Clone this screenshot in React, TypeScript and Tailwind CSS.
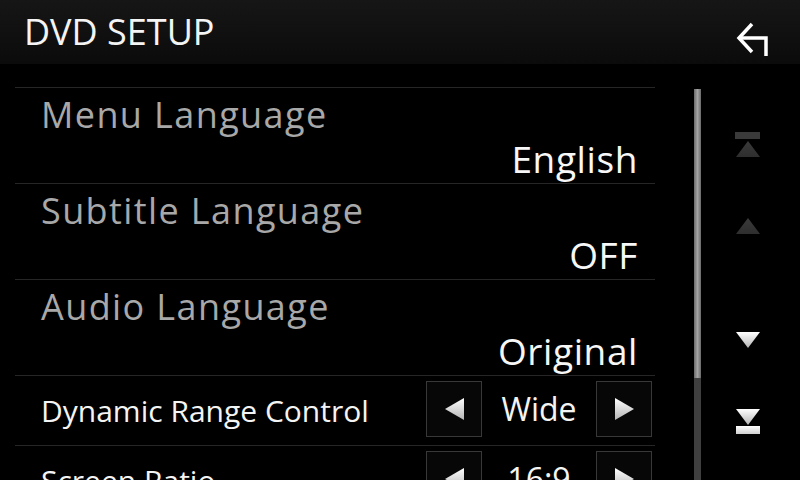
import React from "react";

const font = { fontFamily: '"Open Sans", "Noto Sans", sans-serif' };

const Tri = ({ dir, dim }: { dir: "left" | "right" | "up" | "down"; dim?: boolean }) => {
  const pts = {
    left: "0,11 19,0 19,22",
    right: "19,11 0,0 0,22",
    up: "12,0 0,16 24,16",
    down: "12,16 0,0 24,0",
  }[dir];
  const horiz = dir === "left" || dir === "right";
  const id = `g-${dir}-${dim ? "d" : "l"}`;
  return (
    <svg width={horiz ? 19 : 24} height={horiz ? 22 : 16} viewBox={horiz ? "0 0 19 22" : "0 0 24 16"}>
      <defs>
        <linearGradient id={id} x1="0" y1="0" x2="0" y2="1">
          <stop offset="0" stopColor={dim ? "#3a3a3a" : "#ffffff"} />
          <stop offset="1" stopColor={dim ? "#2e2e2e" : "#b4b4b4"} />
        </linearGradient>
      </defs>
      <polygon points={pts} fill={`url(#${id})`} />
    </svg>
  );
};

const ArrowBox = ({ dir }: { dir: "left" | "right" }) => (
  <div className="flex h-[56px] w-[56px] items-center justify-center border border-[#383838] bg-[#070707]">
    <Tri dir={dir} />
  </div>
);

const rows = [
  { label: "Menu Language", value: "English" },
  { label: "Subtitle Language", value: "OFF" },
  { label: "Audio Language", value: "Original" },
];

const controls = [
  { label: "Dynamic Range Control", value: "Wide" },
  { label: "Screen Ratio", value: "16:9" },
];

export default function App() {
  return (
    <div className="flex h-[480px] w-[800px] flex-col overflow-hidden bg-black text-white" style={font}>
      <div className="flex h-[64px] shrink-0 items-center justify-between bg-gradient-to-b from-[#161616] to-[#0b0b0b] pl-[24px] pr-[30px]">
        <div className="text-[36px] leading-none text-[#f4f4f4]">DVD SETUP</div>
        <svg width="34" height="34" viewBox="0 0 34 34" className="mt-[14px]">
          <path d="M30 34 V16 H3" fill="none" stroke="#fff" strokeWidth="3.5" />
          <path d="M16 2 L3 16 L16 30" fill="none" stroke="#fff" strokeWidth="3.5" />
        </svg>
      </div>
      <div className="flex flex-1 flex-row">
        <div className="w-[655px] shrink-0 pl-[15px] pt-[23px]">
          {rows.map((r) => (
            <div key={r.label} className="relative h-[96px] border-t border-[#262626]">
              <div className="pl-[26px] pt-[5px] text-[36px] leading-[44px] tracking-[1.4px] text-[#a8a8a8]">{r.label}</div>
              <div className="pr-[17px] text-right text-[37px] leading-[44px] tracking-[0.6px] text-[#f7f7f7]">{r.value}</div>
            </div>
          ))}
          {controls.map((c) => (
            <div key={c.label} className="flex h-[70px] items-start border-t border-[#262626] pr-[3px] pt-[5px]">
              <div className="mb-[6px] flex-1 self-center pl-[26px] text-[30px] text-[#f4f4f4]">{c.label}</div>
              <ArrowBox dir="left" />
              <div className="flex h-[56px] w-[114px] items-center justify-center text-[32px] text-[#f4f4f4]">{c.value}</div>
              <ArrowBox dir="right" />
            </div>
          ))}
        </div>
        <div className="ml-[39px] flex w-[7px] flex-col pb-[3px] pt-[25px]">
          <div className="h-[289px] bg-gradient-to-r from-[#6a6a6a] via-[#a4a4a4] to-[#6a6a6a]" />
          <div className="flex-1 bg-[#3f3f3f]" />
        </div>
        <div className="flex flex-1 flex-col items-center pr-[6px] pt-[68px]">
          <div className="flex flex-col items-center gap-[2px]">
            <div className="h-[7px] w-[25px] bg-[#3a3a3a]" />
            <Tri dir="up" dim />
          </div>
          <div className="mt-[61px]">
            <Tri dir="up" dim />
          </div>
          <div className="mt-[98px]">
            <Tri dir="down" />
          </div>
          <div className="mt-[61px] flex flex-col items-center gap-[1px]">
            <Tri dir="down" />
            <div className="h-[8px] w-[24px] bg-gradient-to-b from-[#ffffff] to-[#d0d0d0]" />
          </div>
        </div>
      </div>
    </div>
  );
}
